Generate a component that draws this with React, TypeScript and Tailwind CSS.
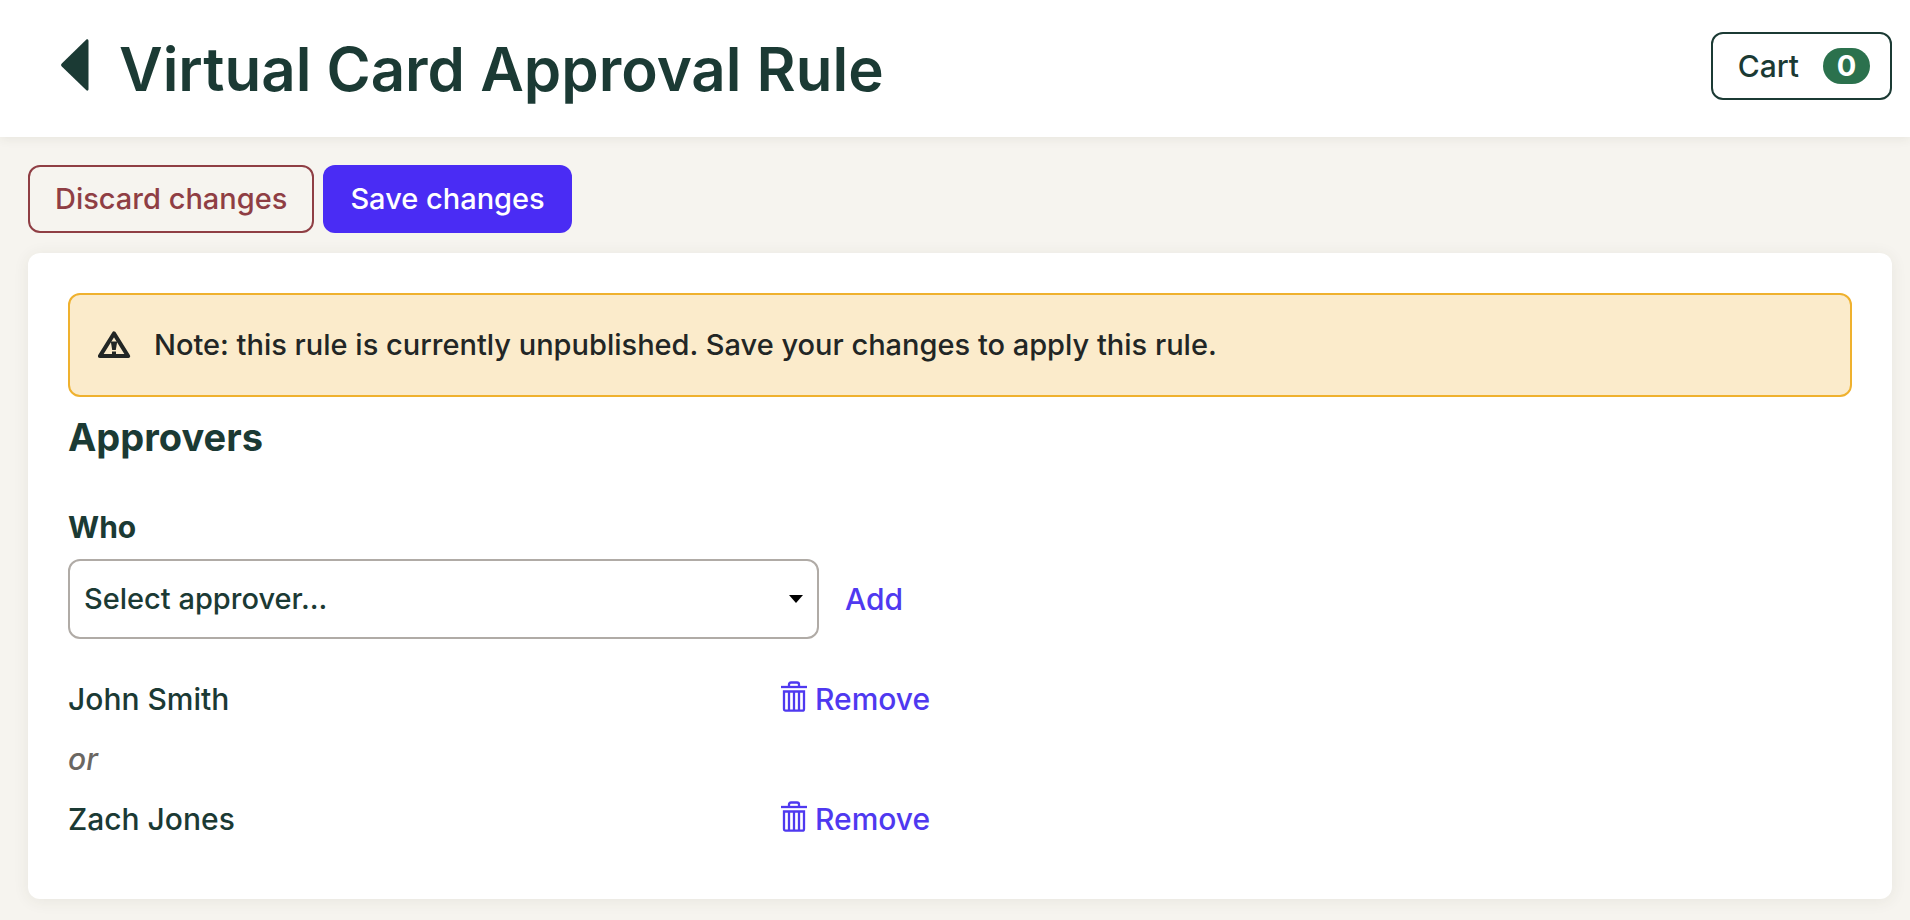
import { useState } from "react";

const PEOPLE = ["John Smith", "Zach Jones"];

function BackArrow() {
  return (
    <svg className="block h-[52px] w-7" viewBox="0 0 28 52" fill="currentColor" aria-hidden="true">
      <path d="M25.4.5C26.400 -.1 27.500 .5 27.500 1.900V50.100C27.500 51.500 26.400 52.100 25.400 51.300L.8 27.600C-.2 26.600 -.2 25.400 .8 24.400Z" />
    </svg>
  );
}

function WarningIcon() {
  return (
    <svg className="block h-7 w-[34px] shrink-0" viewBox="0 0 34 28" aria-hidden="true">
      <path
        d="M16 2.500 30 25H2Z"
        fill="none"
        stroke="currentColor"
        strokeWidth="4.200"
        strokeLinejoin="round"
      />
      <path d="M12.800 10.500H19.200L17.800 19H14.200Z" fill="currentColor" />
      <rect x="14" y="20.500" width="4" height="3.500" fill="currentColor" />
    </svg>
  );
}

function TrashIcon() {
  return (
    <svg
      className="block h-[33px] w-[26px] shrink-0"
      viewBox="0 -2 26 33"
      fill="none"
      stroke="currentColor"
      strokeWidth="2.300"
      aria-hidden="true"
    >
      <path d="M0 6H26" />
      <path d="M8 6V3.500Q8 1.500 10 1.500H16Q18 1.500 18 3.500V6" />
      <path d="M3 10.500H23V28Q23 29.700 21.300 29.700H4.700Q3 29.700 3 28Z" />
      <path d="M8 10.500V30M13 10.500V30M18 10.500V30" />
    </svg>
  );
}

export default function App() {
  const [people, setPeople] = useState(PEOPLE);

  return (
    <div className="min-h-screen bg-[#f6f4ef] font-['Inter',sans-serif] text-[30px] leading-[40px] font-medium text-[#1b3a34]">
      <header className="flex items-start justify-between bg-white pt-8 pr-[18px] pb-[31px] pl-[61px] shadow-[0_2px_10px_rgba(60,60,40,0.08)]">
        <div className="flex items-start gap-[30px]">
          <a href="#back" aria-label="Back" className="pt-[7px]">
            <BackArrow />
          </a>
          <h1 className="text-[60px] leading-[74px] font-semibold">Virtual Card Approval Rule</h1>
        </div>
        <button
          type="button"
          className="flex h-[68px] items-center gap-6 rounded-xl border-2 border-current pr-5 pl-[25px]"
        >
          Cart
          <span className="flex h-9 w-[47px] items-center justify-center rounded-full bg-[#2b714d] text-[29px] leading-9 font-bold text-white">
            0
          </span>
        </button>
      </header>

      <main className="pt-7 pr-[18px] pb-5 pl-7">
        <div className="flex gap-[9px] text-[29px]">
          <button
            type="button"
            className="h-[68px] rounded-xl border-2 border-current px-[25px] text-[#8f3e44]"
          >
            Discard changes
          </button>
          <button type="button" className="h-[68px] rounded-xl bg-[#4a2cf4] px-[27px] text-white">
            Save changes
          </button>
        </div>

        <section className="mt-5 rounded-xl bg-white px-10 pt-10 pb-[50px] shadow-[0_2px_16px_rgba(60,60,40,0.08)]">
          <div
            role="status"
            className="flex items-center gap-[22px] rounded-xl border-2 border-[#efb12e] bg-[#fbebcb] px-7 py-[30px] text-[29px] text-[#222625]"
          >
            <WarningIcon />
            <p>Note: this rule is currently unpublished. Save your changes to apply this rule.</p>
          </div>

          <h2 className="mt-[18px] text-[38px] leading-[44px] font-bold">Approvers</h2>

          <label htmlFor="approver" className="mt-12 block font-bold">
            Who
          </label>
          <div className="mt-3 flex items-center gap-[26px]">
            <div className="relative w-[751px]">
              <select
                id="approver"
                className="block h-20 w-full appearance-none rounded-xl border-2 border-[#b0aba6] bg-white pr-14 pl-[14px] text-[29px]"
              >
                <option>Select approver...</option>
              </select>
              <svg
                className="pointer-events-none absolute top-9 right-4 h-2 w-[14px] text-black"
                viewBox="0 0 14 8"
                fill="currentColor"
                aria-hidden="true"
              >
                <path d="M0 0H14L7 8Z" />
              </svg>
            </div>
            <button type="button" className="text-[#4f39f0]">
              Add
            </button>
          </div>

          <ul className="mt-[30px]">
            {people.map((name, i) => (
              <li key={name}>
                {i > 0 && <p className="py-[10px] text-[#6b6762] italic">or</p>}
                <div className="flex items-center py-[10px]">
                  <span className="w-[713px]">{name}</span>
                  <button
                    type="button"
                    className="flex items-start gap-2 text-[#4f39f0]"
                    onClick={() => setPeople(people.filter((p) => p !== name))}
                  >
                    <TrashIcon />
                    Remove
                  </button>
                </div>
              </li>
            ))}
          </ul>
        </section>
      </main>
    </div>
  );
}
